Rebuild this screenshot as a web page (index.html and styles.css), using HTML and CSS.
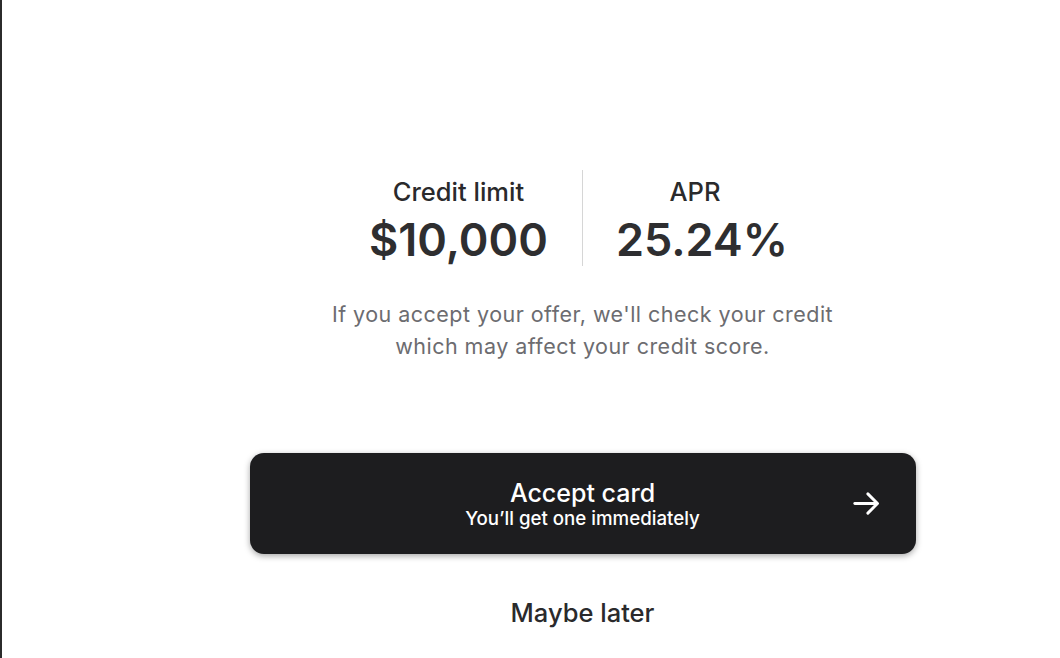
FILE: index.html
```html
<!DOCTYPE html>
<html>
<head>
<meta charset="utf-8">
<link rel="stylesheet" href="styles.css">
</head>
<body>
<div class="page">
  <div class="content">
    <div class="stats">
      <div class="stat">
        <div class="label">Credit limit</div>
        <div class="value">$10,000</div>
      </div>
      <div class="divider"></div>
      <div class="stat stat-right">
        <div class="label label-apr">APR</div>
        <div class="value">25.24%</div>
      </div>
    </div>
    <p class="note">If you accept your offer, we'll check your credit<br>which may affect your credit score.</p>
    <button class="accept">
      <span class="accept-text">
        <span class="accept-title">Accept card</span>
        <span class="accept-sub">You’ll get one immediately</span>
      </span>
      <svg class="arrow" width="33" height="33" viewBox="0 0 24 24" fill="none" stroke="#fff" stroke-width="2.1" stroke-linecap="round" stroke-linejoin="round"><path d="M3.5 12h16"/><path d="M13 5l7 7-7 7"/></svg>
    </button>
    <div class="later">Maybe later</div>
  </div>
</div>
</body>
</html>
```
FILE: styles.css
```css
html, body {
  margin: 0;
  padding: 0;
  background: #fff;
  overflow: hidden;
}
body {
  font-family: Inter, "Noto Sans", sans-serif;
  color: #2a2a2c;
  width: 1060px;
  height: 658px;
}
.page {
  height: 658px;
  border-left: 2px solid #2b2b2b;
  overflow: hidden;
}
.content {
  width: 1161px;
  display: flex;
  flex-direction: column;
  align-items: center;
  padding-top: 170px;
}
.stats {
  display: flex;
  align-items: stretch;
  margin-right: 6px;
}
.stat {
  display: flex;
  flex-direction: column;
  align-items: center;
  padding: 6px 34px 0;
}
.stat-right {
  padding-left: 33px;
  padding-right: 36px;
}
.label {
  font-size: 25.5px;
  font-weight: 500;
  line-height: 32px;
  color: #2a2a2c;
}
.label-apr {
  margin-right: 14px;
}
.value {
  font-size: 45px;
  font-weight: 600;
  line-height: 52px;
  color: #2e2e30;
  margin-top: 6px;
}
.divider {
  width: 1px;
  background: #d6d6d6;
}
.note {
  margin: 32px 0 0;
  text-align: center;
  font-size: 21.5px;
  line-height: 32px;
  color: #6c6c70;
  letter-spacing: 0.47px;
}
.accept {
  margin-top: 91px;
  width: 666px;
  height: 101px;
  border: none;
  border-radius: 14px;
  background: #1d1d1f;
  box-shadow: 0 2px 6px rgba(0,0,0,0.35);
  display: flex;
  align-items: center;
  justify-content: center;
  position: relative;
  font-family: inherit;
  padding: 0;
}
.accept-text {
  display: flex;
  flex-direction: column;
  align-items: center;
  color: #fff;
}
.accept-title {
  font-size: 25px;
  font-weight: 500;
  line-height: 30px;
}
.accept-sub {
  font-size: 18.7px;
  font-weight: 500;
  line-height: 22px;
}
.arrow {
  position: absolute;
  right: 33px;
  top: 34px;
}
.later {
  margin-top: 43px;
  font-size: 25.5px;
  font-weight: 500;
  color: #2a2a2c;
}
```
